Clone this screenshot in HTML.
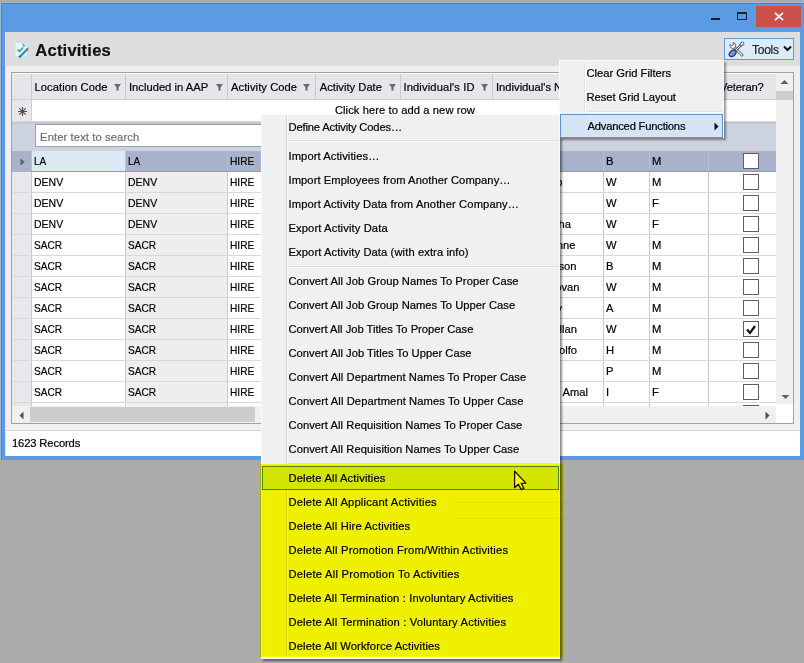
<!DOCTYPE html><html><head><meta charset="utf-8"><style>
*{margin:0;padding:0;box-sizing:border-box}
html,body{width:804px;height:663px;overflow:hidden;background:#ababab;font-family:"Liberation Sans",sans-serif;font-size:11.2px;color:#000}
div,span{position:absolute}
.t{white-space:nowrap;-webkit-text-stroke:0.2px currentColor}
</style></head><body><div style="left:0px;top:0px;width:804px;height:3px;background:#adaaa5;"></div>
<div style="left:0px;top:2px;width:804px;height:458px;background:#5b9be4;"></div>
<div style="left:0px;top:2px;width:804px;height:1px;background:#a2b4cc;"></div>
<div style="left:0px;top:3px;width:804px;height:1px;background:#4f80bd;"></div>
<div style="left:1px;top:3px;width:1px;height:457px;background:#4f80b5;"></div>
<div style="left:0px;top:3px;width:1px;height:457px;background:#9bbcd4;"></div>
<div style="left:5px;top:32px;width:795px;height:424px;background:#f0f0f0;"></div>
<div style="left:5px;top:32px;width:795px;height:34px;background:#dddddd;"></div>
<div style="left:5px;top:32px;width:1px;height:424px;background:#d8ecf8;"></div>
<div style="left:711px;top:18px;width:9px;height:2px;background:#0f1a2a;"></div>
<div style="left:737px;top:12px;width:10px;height:8px;border:1px solid #1b2535;border-top-width:2px"></div>
<div style="left:756px;top:6px;width:45px;height:21px;background:#c9514a;"></div>
<svg style="position:absolute;left:774px;top:12px" width="10" height="9" viewBox="0 0 10 9"><path d="M1 0.8 L9 8.2 M9 0.8 L1 8.2" stroke="#fff" stroke-width="1.7"/></svg>
<svg style="position:absolute;left:13px;top:41px" width="17" height="17" viewBox="0 0 17 17"><path d="M2 1.5 L11 1.5 L14.5 5 L14.5 16 L2 16 Z" fill="#e6f6fc" stroke="#c4e4f2" stroke-width="1"/><path d="M9 1.5 L12.5 5 L10.5 6 Z" fill="#4aa8a8"/><path d="M4.5 8.5 L6.5 10.5 L10 6.5" fill="none" stroke="#3d9a74" stroke-width="1.5"/><path d="M6 15 L13 8 L14.6 9.6 L7.6 16.6 Z" fill="#1d93da"/><path d="M13 8 L14.2 6.6 L15.8 8.2 L14.6 9.6 Z" fill="#b24a3a"/><circle cx="6.5" cy="15.6" r="0.9" fill="#2a3a4a"/></svg>
<span class="t" style="left:35.30px;top:41px;line-height:12px;letter-spacing:0.189px;font-size:16.6px;font-weight:bold;line-height:20px;color:#111">Activities</span>
<div style="left:724px;top:38px;width:70px;height:22px;background:#dcebfa;border:1px solid #5b9bd5"></div>
<svg style="position:absolute;left:728px;top:41px" width="17" height="17" viewBox="0 0 17 17"><path d="M6.5 6.5 L14 14" stroke="#6b6b6b" stroke-width="3" stroke-linecap="round"/><path d="M6.5 6.5 L14 14" stroke="#f2f2f2" stroke-width="1.1" stroke-linecap="round"/><path d="M2.2 3.2 Q1.2 6.8 4.6 7.6 Q7.6 7.8 7.8 4.8 Q7.6 2 5.2 1.4 L5.4 3.8 L3.8 4.6 Z" fill="#f6e4e4" stroke="#6b6b6b" stroke-width="1"/><path d="M7 10 L13.6 3.4" stroke="#6b6b6b" stroke-width="2.8" stroke-linecap="round"/><path d="M7 10 L13.6 3.4" stroke="#f2f2f2" stroke-width="1" stroke-linecap="round"/><ellipse cx="14" cy="3" rx="2.1" ry="1.5" transform="rotate(-45 14 3)" fill="#f8f8f8" stroke="#6b6b6b" stroke-width="1"/><ellipse cx="4.6" cy="12.4" rx="3.9" ry="2.6" transform="rotate(-45 4.6 12.4)" fill="#7b96d2" stroke="#1e3c78" stroke-width="1.3"/></svg>
<span class="t" style="left:752.00px;top:44px;line-height:12px;letter-spacing:-0.250px;font-size:12px;color:#222">Tools</span>
<svg style="position:absolute;left:783px;top:45px" width="9" height="7" viewBox="0 0 9 7"><path d="M1 1.5 L4.5 5 L8 1.5" fill="none" stroke="#111" stroke-width="2"/></svg>
<div style="left:11px;top:72px;width:783px;height:352px;background:#a0a0a5;"></div>
<div style="left:12px;top:73px;width:781px;height:350px;background:#ffffff;"></div>
<div style="left:12px;top:73px;width:764px;height:1px;background:#ffffff;"></div>
<div style="left:12px;top:74px;width:764px;height:25px;background:#e6e6ea;"></div>
<div style="left:12px;top:99px;width:764px;height:1px;background:#cfcfd4;"></div>
<div style="left:776px;top:73px;width:17px;height:350px;background:#f0f0f0;"></div>
<div style="left:776px;top:73px;width:17px;height:18px;background:#f0f0f0;"></div>
<div style="left:776px;top:91px;width:17px;height:9px;background:#cdcdcd;"></div>
<svg style="position:absolute;left:780px;top:79px" width="9" height="6"><path d="M0.5 5 L4.5 1 L8.5 5 Z" fill="#606060"/></svg>
<svg style="position:absolute;left:781px;top:394px" width="9" height="6"><path d="M0.5 1 L4.5 5 L8.5 1 Z" fill="#606060"/></svg>
<div style="left:776px;top:404px;width:17px;height:19px;background:#ffffff;"></div>
<div style="left:12px;top:74px;width:19px;height:25px;background:#e6e6ea;"></div>
<div style="left:31px;top:74px;width:1px;height:25px;background:#c9c9cf;"></div>
<div style="left:125px;top:74px;width:1px;height:25px;background:#c9c9cf;"></div>
<div style="left:227px;top:74px;width:1px;height:25px;background:#c9c9cf;"></div>
<div style="left:315px;top:74px;width:1px;height:25px;background:#c9c9cf;"></div>
<div style="left:400px;top:74px;width:1px;height:25px;background:#c9c9cf;"></div>
<div style="left:492px;top:74px;width:1px;height:25px;background:#c9c9cf;"></div>
<div style="left:603px;top:74px;width:1px;height:25px;background:#c9c9cf;"></div>
<div style="left:649px;top:74px;width:1px;height:25px;background:#c9c9cf;"></div>
<div style="left:708px;top:74px;width:1px;height:25px;background:#c9c9cf;"></div>
<span class="t" style="left:34.50px;top:81px;line-height:12px;letter-spacing:0.067px;color:#000">Location Code</span>
<svg style="position:absolute;left:114px;top:83px" width="8" height="8" viewBox="0 0 8 8"><path d="M0 1 L7 1 L4.6 4.2 L4.6 7.6 L2.4 7.6 L2.4 4.2 Z" fill="#6a6a6a"/></svg>
<span class="t" style="left:129.00px;top:81px;line-height:12px;letter-spacing:0.007px;color:#000">Included in AAP</span>
<svg style="position:absolute;left:216px;top:83px" width="8" height="8" viewBox="0 0 8 8"><path d="M0 1 L7 1 L4.6 4.2 L4.6 7.6 L2.4 7.6 L2.4 4.2 Z" fill="#6a6a6a"/></svg>
<span class="t" style="left:231.00px;top:81px;line-height:12px;letter-spacing:0.067px;color:#000">Activity Code</span>
<svg style="position:absolute;left:303px;top:83px" width="8" height="8" viewBox="0 0 8 8"><path d="M0 1 L7 1 L4.6 4.2 L4.6 7.6 L2.4 7.6 L2.4 4.2 Z" fill="#6a6a6a"/></svg>
<span class="t" style="left:319.70px;top:81px;line-height:12px;letter-spacing:0.008px;color:#000">Activity Date</span>
<svg style="position:absolute;left:389px;top:83px" width="8" height="8" viewBox="0 0 8 8"><path d="M0 1 L7 1 L4.6 4.2 L4.6 7.6 L2.4 7.6 L2.4 4.2 Z" fill="#6a6a6a"/></svg>
<span class="t" style="left:403.40px;top:81px;line-height:12px;letter-spacing:0.136px;color:#000">Individual's ID</span>
<svg style="position:absolute;left:481px;top:83px" width="8" height="8" viewBox="0 0 8 8"><path d="M0 1 L7 1 L4.6 4.2 L4.6 7.6 L2.4 7.6 L2.4 4.2 Z" fill="#6a6a6a"/></svg>
<span class="t" style="left:496px;top:81px;line-height:12px;color:#000">Individual's Name</span>
<span class="t" style="left:720.00px;top:81px;line-height:12px;letter-spacing:-0.143px;color:#000">Veteran?</span>
<div style="left:12px;top:100px;width:764px;height:21px;background:#ffffff;"></div>
<div style="left:12px;top:100px;width:19px;height:21px;background:#e8e8ec;"></div>
<div style="left:31px;top:100px;width:1px;height:21px;background:#d0d0d6;"></div>
<svg style="position:absolute;left:17px;top:106px" width="11" height="11" viewBox="0 0 11 11"><path d="M5.5 1 V10 M1 5.5 H10 M2.3 2.3 L8.7 8.7 M2.3 8.7 L8.7 2.3" stroke="#505050" stroke-width="1.15"/></svg>
<span class="t" style="left:334.90px;top:104px;line-height:12px;letter-spacing:0.077px;color:#000">Click here to add a new row</span>
<div style="left:12px;top:121px;width:764px;height:1px;background:#d8d8dc;"></div>
<div style="left:12px;top:122px;width:764px;height:29px;background:#cdd2e0;"></div>
<div style="left:12px;top:122px;width:764px;height:2px;background:#c4c6d0;"></div>
<div style="left:35px;top:124px;width:480px;height:23px;background:#ffffff;border:1px solid;border-color:#9da1ab #c4c8d0 #9da1ab #9da1ab"></div>
<span class="t" style="left:40.10px;top:131px;line-height:12px;letter-spacing:0.111px;color:#6d6d6d">Enter text to search</span>
<div style="left:12px;top:151px;width:764px;height:21px;background:#a9b1cb;"></div>
<div style="left:31px;top:151px;width:94px;height:21px;background:#dde8f3;"></div>
<svg style="position:absolute;left:20px;top:158px" width="6" height="8"><path d="M0.5 0.5 L5 4 L0.5 7.5 Z" fill="#62656f"/></svg>
<div style="left:31px;top:151px;width:1px;height:21px;background:#b9bfd6;"></div>
<div style="left:125px;top:151px;width:1px;height:21px;background:#b9bfd6;"></div>
<div style="left:227px;top:151px;width:1px;height:21px;background:#b9bfd6;"></div>
<div style="left:315px;top:151px;width:1px;height:21px;background:#b9bfd6;"></div>
<div style="left:400px;top:151px;width:1px;height:21px;background:#b9bfd6;"></div>
<div style="left:492px;top:151px;width:1px;height:21px;background:#b9bfd6;"></div>
<div style="left:603px;top:151px;width:1px;height:21px;background:#b9bfd6;"></div>
<div style="left:649px;top:151px;width:1px;height:21px;background:#b9bfd6;"></div>
<div style="left:708px;top:151px;width:1px;height:21px;background:#b9bfd6;"></div>
<div style="left:31px;top:171px;width:745px;height:1px;background:#6ea2dc;"></div>
<span class="t" style="left:33.71px;top:155px;line-height:12px;transform:scaleX(0.8923);transform-origin:0 0;">LA</span>
<span class="t" style="left:127.61px;top:155px;line-height:12px;transform:scaleX(0.8923);transform-origin:0 0;">LA</span>
<span class="t" style="left:229.69px;top:155px;line-height:12px;transform:scaleX(0.9080);transform-origin:0 0;">HIRE</span>
<span class="t" style="left:606px;top:155px;line-height:12px;">B</span>
<span class="t" style="left:652px;top:155px;line-height:12px;">M</span>
<div style="left:743px;top:153px;width:16px;height:16px;border:1px solid #5e5e5e;background:#fff"></div>
<div style="left:12px;top:172px;width:19px;height:21px;background:#e8e8ec;"></div>
<div style="left:31px;top:172px;width:745px;height:21px;background:#ffffff;"></div>
<div style="left:125px;top:172px;width:102px;height:21px;background:#efeeec;"></div>
<div style="left:31px;top:172px;width:1px;height:21px;background:#c9c9cf;"></div>
<div style="left:125px;top:172px;width:1px;height:21px;background:#c9c9cf;"></div>
<div style="left:227px;top:172px;width:1px;height:21px;background:#c9c9cf;"></div>
<div style="left:315px;top:172px;width:1px;height:21px;background:#c9c9cf;"></div>
<div style="left:400px;top:172px;width:1px;height:21px;background:#c9c9cf;"></div>
<div style="left:492px;top:172px;width:1px;height:21px;background:#c9c9cf;"></div>
<div style="left:603px;top:172px;width:1px;height:21px;background:#c9c9cf;"></div>
<div style="left:649px;top:172px;width:1px;height:21px;background:#c9c9cf;"></div>
<div style="left:708px;top:172px;width:1px;height:21px;background:#c9c9cf;"></div>
<div style="left:12px;top:192px;width:764px;height:1px;background:#d8d8dc;"></div>
<span class="t" style="left:33.66px;top:176px;line-height:12px;transform:scaleX(0.9367);transform-origin:0 0;">DENV</span>
<span class="t" style="left:127.56px;top:176px;line-height:12px;transform:scaleX(0.9367);transform-origin:0 0;">DENV</span>
<span class="t" style="left:229.69px;top:176px;line-height:12px;transform:scaleX(0.9080);transform-origin:0 0;">HIRE</span>
<span class="t" style="left:606px;top:176px;line-height:12px;">W</span>
<span class="t" style="left:652px;top:176px;line-height:12px;">M</span>
<div style="left:743px;top:174px;width:16px;height:16px;border:1px solid #5e5e5e;background:#fff"></div>
<div style="left:12px;top:193px;width:19px;height:21px;background:#e8e8ec;"></div>
<div style="left:31px;top:193px;width:745px;height:21px;background:#ffffff;"></div>
<div style="left:125px;top:193px;width:102px;height:21px;background:#efeeec;"></div>
<div style="left:31px;top:193px;width:1px;height:21px;background:#c9c9cf;"></div>
<div style="left:125px;top:193px;width:1px;height:21px;background:#c9c9cf;"></div>
<div style="left:227px;top:193px;width:1px;height:21px;background:#c9c9cf;"></div>
<div style="left:315px;top:193px;width:1px;height:21px;background:#c9c9cf;"></div>
<div style="left:400px;top:193px;width:1px;height:21px;background:#c9c9cf;"></div>
<div style="left:492px;top:193px;width:1px;height:21px;background:#c9c9cf;"></div>
<div style="left:603px;top:193px;width:1px;height:21px;background:#c9c9cf;"></div>
<div style="left:649px;top:193px;width:1px;height:21px;background:#c9c9cf;"></div>
<div style="left:708px;top:193px;width:1px;height:21px;background:#c9c9cf;"></div>
<div style="left:12px;top:213px;width:764px;height:1px;background:#d8d8dc;"></div>
<span class="t" style="left:33.66px;top:197px;line-height:12px;transform:scaleX(0.9367);transform-origin:0 0;">DENV</span>
<span class="t" style="left:127.56px;top:197px;line-height:12px;transform:scaleX(0.9367);transform-origin:0 0;">DENV</span>
<span class="t" style="left:229.69px;top:197px;line-height:12px;transform:scaleX(0.9080);transform-origin:0 0;">HIRE</span>
<span class="t" style="left:606px;top:197px;line-height:12px;">W</span>
<span class="t" style="left:652px;top:197px;line-height:12px;">F</span>
<div style="left:743px;top:195px;width:16px;height:16px;border:1px solid #5e5e5e;background:#fff"></div>
<div style="left:12px;top:214px;width:19px;height:21px;background:#e8e8ec;"></div>
<div style="left:31px;top:214px;width:745px;height:21px;background:#ffffff;"></div>
<div style="left:125px;top:214px;width:102px;height:21px;background:#efeeec;"></div>
<div style="left:31px;top:214px;width:1px;height:21px;background:#c9c9cf;"></div>
<div style="left:125px;top:214px;width:1px;height:21px;background:#c9c9cf;"></div>
<div style="left:227px;top:214px;width:1px;height:21px;background:#c9c9cf;"></div>
<div style="left:315px;top:214px;width:1px;height:21px;background:#c9c9cf;"></div>
<div style="left:400px;top:214px;width:1px;height:21px;background:#c9c9cf;"></div>
<div style="left:492px;top:214px;width:1px;height:21px;background:#c9c9cf;"></div>
<div style="left:603px;top:214px;width:1px;height:21px;background:#c9c9cf;"></div>
<div style="left:649px;top:214px;width:1px;height:21px;background:#c9c9cf;"></div>
<div style="left:708px;top:214px;width:1px;height:21px;background:#c9c9cf;"></div>
<div style="left:12px;top:234px;width:764px;height:1px;background:#d8d8dc;"></div>
<span class="t" style="left:33.66px;top:218px;line-height:12px;transform:scaleX(0.9367);transform-origin:0 0;">DENV</span>
<span class="t" style="left:127.56px;top:218px;line-height:12px;transform:scaleX(0.9367);transform-origin:0 0;">DENV</span>
<span class="t" style="left:229.69px;top:218px;line-height:12px;transform:scaleX(0.9080);transform-origin:0 0;">HIRE</span>
<span class="t" style="left:606px;top:218px;line-height:12px;">W</span>
<span class="t" style="left:652px;top:218px;line-height:12px;">F</span>
<div style="left:743px;top:216px;width:16px;height:16px;border:1px solid #5e5e5e;background:#fff"></div>
<div style="left:12px;top:235px;width:19px;height:21px;background:#e8e8ec;"></div>
<div style="left:31px;top:235px;width:745px;height:21px;background:#ffffff;"></div>
<div style="left:125px;top:235px;width:102px;height:21px;background:#efeeec;"></div>
<div style="left:31px;top:235px;width:1px;height:21px;background:#c9c9cf;"></div>
<div style="left:125px;top:235px;width:1px;height:21px;background:#c9c9cf;"></div>
<div style="left:227px;top:235px;width:1px;height:21px;background:#c9c9cf;"></div>
<div style="left:315px;top:235px;width:1px;height:21px;background:#c9c9cf;"></div>
<div style="left:400px;top:235px;width:1px;height:21px;background:#c9c9cf;"></div>
<div style="left:492px;top:235px;width:1px;height:21px;background:#c9c9cf;"></div>
<div style="left:603px;top:235px;width:1px;height:21px;background:#c9c9cf;"></div>
<div style="left:649px;top:235px;width:1px;height:21px;background:#c9c9cf;"></div>
<div style="left:708px;top:235px;width:1px;height:21px;background:#c9c9cf;"></div>
<div style="left:12px;top:255px;width:764px;height:1px;background:#d8d8dc;"></div>
<span class="t" style="left:33.70px;top:239px;line-height:12px;transform:scaleX(0.9034);transform-origin:0 0;">SACR</span>
<span class="t" style="left:127.60px;top:239px;line-height:12px;transform:scaleX(0.9034);transform-origin:0 0;">SACR</span>
<span class="t" style="left:229.69px;top:239px;line-height:12px;transform:scaleX(0.9080);transform-origin:0 0;">HIRE</span>
<span class="t" style="left:606px;top:239px;line-height:12px;">W</span>
<span class="t" style="left:652px;top:239px;line-height:12px;">M</span>
<div style="left:743px;top:237px;width:16px;height:16px;border:1px solid #5e5e5e;background:#fff"></div>
<div style="left:12px;top:256px;width:19px;height:21px;background:#e8e8ec;"></div>
<div style="left:31px;top:256px;width:745px;height:21px;background:#ffffff;"></div>
<div style="left:125px;top:256px;width:102px;height:21px;background:#efeeec;"></div>
<div style="left:31px;top:256px;width:1px;height:21px;background:#c9c9cf;"></div>
<div style="left:125px;top:256px;width:1px;height:21px;background:#c9c9cf;"></div>
<div style="left:227px;top:256px;width:1px;height:21px;background:#c9c9cf;"></div>
<div style="left:315px;top:256px;width:1px;height:21px;background:#c9c9cf;"></div>
<div style="left:400px;top:256px;width:1px;height:21px;background:#c9c9cf;"></div>
<div style="left:492px;top:256px;width:1px;height:21px;background:#c9c9cf;"></div>
<div style="left:603px;top:256px;width:1px;height:21px;background:#c9c9cf;"></div>
<div style="left:649px;top:256px;width:1px;height:21px;background:#c9c9cf;"></div>
<div style="left:708px;top:256px;width:1px;height:21px;background:#c9c9cf;"></div>
<div style="left:12px;top:276px;width:764px;height:1px;background:#d8d8dc;"></div>
<span class="t" style="left:33.70px;top:260px;line-height:12px;transform:scaleX(0.9034);transform-origin:0 0;">SACR</span>
<span class="t" style="left:127.60px;top:260px;line-height:12px;transform:scaleX(0.9034);transform-origin:0 0;">SACR</span>
<span class="t" style="left:229.69px;top:260px;line-height:12px;transform:scaleX(0.9080);transform-origin:0 0;">HIRE</span>
<span class="t" style="left:606px;top:260px;line-height:12px;">B</span>
<span class="t" style="left:652px;top:260px;line-height:12px;">M</span>
<div style="left:743px;top:258px;width:16px;height:16px;border:1px solid #5e5e5e;background:#fff"></div>
<div style="left:12px;top:277px;width:19px;height:21px;background:#e8e8ec;"></div>
<div style="left:31px;top:277px;width:745px;height:21px;background:#ffffff;"></div>
<div style="left:125px;top:277px;width:102px;height:21px;background:#efeeec;"></div>
<div style="left:31px;top:277px;width:1px;height:21px;background:#c9c9cf;"></div>
<div style="left:125px;top:277px;width:1px;height:21px;background:#c9c9cf;"></div>
<div style="left:227px;top:277px;width:1px;height:21px;background:#c9c9cf;"></div>
<div style="left:315px;top:277px;width:1px;height:21px;background:#c9c9cf;"></div>
<div style="left:400px;top:277px;width:1px;height:21px;background:#c9c9cf;"></div>
<div style="left:492px;top:277px;width:1px;height:21px;background:#c9c9cf;"></div>
<div style="left:603px;top:277px;width:1px;height:21px;background:#c9c9cf;"></div>
<div style="left:649px;top:277px;width:1px;height:21px;background:#c9c9cf;"></div>
<div style="left:708px;top:277px;width:1px;height:21px;background:#c9c9cf;"></div>
<div style="left:12px;top:297px;width:764px;height:1px;background:#d8d8dc;"></div>
<span class="t" style="left:33.70px;top:281px;line-height:12px;transform:scaleX(0.9034);transform-origin:0 0;">SACR</span>
<span class="t" style="left:127.60px;top:281px;line-height:12px;transform:scaleX(0.9034);transform-origin:0 0;">SACR</span>
<span class="t" style="left:229.69px;top:281px;line-height:12px;transform:scaleX(0.9080);transform-origin:0 0;">HIRE</span>
<span class="t" style="left:606px;top:281px;line-height:12px;">W</span>
<span class="t" style="left:652px;top:281px;line-height:12px;">M</span>
<div style="left:743px;top:279px;width:16px;height:16px;border:1px solid #5e5e5e;background:#fff"></div>
<div style="left:12px;top:298px;width:19px;height:21px;background:#e8e8ec;"></div>
<div style="left:31px;top:298px;width:745px;height:21px;background:#ffffff;"></div>
<div style="left:125px;top:298px;width:102px;height:21px;background:#efeeec;"></div>
<div style="left:31px;top:298px;width:1px;height:21px;background:#c9c9cf;"></div>
<div style="left:125px;top:298px;width:1px;height:21px;background:#c9c9cf;"></div>
<div style="left:227px;top:298px;width:1px;height:21px;background:#c9c9cf;"></div>
<div style="left:315px;top:298px;width:1px;height:21px;background:#c9c9cf;"></div>
<div style="left:400px;top:298px;width:1px;height:21px;background:#c9c9cf;"></div>
<div style="left:492px;top:298px;width:1px;height:21px;background:#c9c9cf;"></div>
<div style="left:603px;top:298px;width:1px;height:21px;background:#c9c9cf;"></div>
<div style="left:649px;top:298px;width:1px;height:21px;background:#c9c9cf;"></div>
<div style="left:708px;top:298px;width:1px;height:21px;background:#c9c9cf;"></div>
<div style="left:12px;top:318px;width:764px;height:1px;background:#d8d8dc;"></div>
<span class="t" style="left:33.70px;top:302px;line-height:12px;transform:scaleX(0.9034);transform-origin:0 0;">SACR</span>
<span class="t" style="left:127.60px;top:302px;line-height:12px;transform:scaleX(0.9034);transform-origin:0 0;">SACR</span>
<span class="t" style="left:229.69px;top:302px;line-height:12px;transform:scaleX(0.9080);transform-origin:0 0;">HIRE</span>
<span class="t" style="left:606px;top:302px;line-height:12px;">A</span>
<span class="t" style="left:652px;top:302px;line-height:12px;">M</span>
<div style="left:743px;top:300px;width:16px;height:16px;border:1px solid #5e5e5e;background:#fff"></div>
<div style="left:12px;top:319px;width:19px;height:21px;background:#e8e8ec;"></div>
<div style="left:31px;top:319px;width:745px;height:21px;background:#ffffff;"></div>
<div style="left:125px;top:319px;width:102px;height:21px;background:#efeeec;"></div>
<div style="left:31px;top:319px;width:1px;height:21px;background:#c9c9cf;"></div>
<div style="left:125px;top:319px;width:1px;height:21px;background:#c9c9cf;"></div>
<div style="left:227px;top:319px;width:1px;height:21px;background:#c9c9cf;"></div>
<div style="left:315px;top:319px;width:1px;height:21px;background:#c9c9cf;"></div>
<div style="left:400px;top:319px;width:1px;height:21px;background:#c9c9cf;"></div>
<div style="left:492px;top:319px;width:1px;height:21px;background:#c9c9cf;"></div>
<div style="left:603px;top:319px;width:1px;height:21px;background:#c9c9cf;"></div>
<div style="left:649px;top:319px;width:1px;height:21px;background:#c9c9cf;"></div>
<div style="left:708px;top:319px;width:1px;height:21px;background:#c9c9cf;"></div>
<div style="left:12px;top:339px;width:764px;height:1px;background:#d8d8dc;"></div>
<span class="t" style="left:33.70px;top:323px;line-height:12px;transform:scaleX(0.9034);transform-origin:0 0;">SACR</span>
<span class="t" style="left:127.60px;top:323px;line-height:12px;transform:scaleX(0.9034);transform-origin:0 0;">SACR</span>
<span class="t" style="left:229.69px;top:323px;line-height:12px;transform:scaleX(0.9080);transform-origin:0 0;">HIRE</span>
<span class="t" style="left:606px;top:323px;line-height:12px;">W</span>
<span class="t" style="left:652px;top:323px;line-height:12px;">M</span>
<div style="left:743px;top:321px;width:16px;height:16px;border:1px solid #5e5e5e;background:#fff"></div>
<svg style="position:absolute;left:743px;top:321px" width="16" height="16"><path d="M4 8.5 L7 12 L12 5" fill="none" stroke="#111" stroke-width="2.2"/></svg>
<div style="left:12px;top:340px;width:19px;height:21px;background:#e8e8ec;"></div>
<div style="left:31px;top:340px;width:745px;height:21px;background:#ffffff;"></div>
<div style="left:125px;top:340px;width:102px;height:21px;background:#efeeec;"></div>
<div style="left:31px;top:340px;width:1px;height:21px;background:#c9c9cf;"></div>
<div style="left:125px;top:340px;width:1px;height:21px;background:#c9c9cf;"></div>
<div style="left:227px;top:340px;width:1px;height:21px;background:#c9c9cf;"></div>
<div style="left:315px;top:340px;width:1px;height:21px;background:#c9c9cf;"></div>
<div style="left:400px;top:340px;width:1px;height:21px;background:#c9c9cf;"></div>
<div style="left:492px;top:340px;width:1px;height:21px;background:#c9c9cf;"></div>
<div style="left:603px;top:340px;width:1px;height:21px;background:#c9c9cf;"></div>
<div style="left:649px;top:340px;width:1px;height:21px;background:#c9c9cf;"></div>
<div style="left:708px;top:340px;width:1px;height:21px;background:#c9c9cf;"></div>
<div style="left:12px;top:360px;width:764px;height:1px;background:#d8d8dc;"></div>
<span class="t" style="left:33.70px;top:344px;line-height:12px;transform:scaleX(0.9034);transform-origin:0 0;">SACR</span>
<span class="t" style="left:127.60px;top:344px;line-height:12px;transform:scaleX(0.9034);transform-origin:0 0;">SACR</span>
<span class="t" style="left:229.69px;top:344px;line-height:12px;transform:scaleX(0.9080);transform-origin:0 0;">HIRE</span>
<span class="t" style="left:606px;top:344px;line-height:12px;">H</span>
<span class="t" style="left:652px;top:344px;line-height:12px;">M</span>
<div style="left:743px;top:342px;width:16px;height:16px;border:1px solid #5e5e5e;background:#fff"></div>
<div style="left:12px;top:361px;width:19px;height:21px;background:#e8e8ec;"></div>
<div style="left:31px;top:361px;width:745px;height:21px;background:#ffffff;"></div>
<div style="left:125px;top:361px;width:102px;height:21px;background:#efeeec;"></div>
<div style="left:31px;top:361px;width:1px;height:21px;background:#c9c9cf;"></div>
<div style="left:125px;top:361px;width:1px;height:21px;background:#c9c9cf;"></div>
<div style="left:227px;top:361px;width:1px;height:21px;background:#c9c9cf;"></div>
<div style="left:315px;top:361px;width:1px;height:21px;background:#c9c9cf;"></div>
<div style="left:400px;top:361px;width:1px;height:21px;background:#c9c9cf;"></div>
<div style="left:492px;top:361px;width:1px;height:21px;background:#c9c9cf;"></div>
<div style="left:603px;top:361px;width:1px;height:21px;background:#c9c9cf;"></div>
<div style="left:649px;top:361px;width:1px;height:21px;background:#c9c9cf;"></div>
<div style="left:708px;top:361px;width:1px;height:21px;background:#c9c9cf;"></div>
<div style="left:12px;top:381px;width:764px;height:1px;background:#d8d8dc;"></div>
<span class="t" style="left:33.70px;top:365px;line-height:12px;transform:scaleX(0.9034);transform-origin:0 0;">SACR</span>
<span class="t" style="left:127.60px;top:365px;line-height:12px;transform:scaleX(0.9034);transform-origin:0 0;">SACR</span>
<span class="t" style="left:229.69px;top:365px;line-height:12px;transform:scaleX(0.9080);transform-origin:0 0;">HIRE</span>
<span class="t" style="left:606px;top:365px;line-height:12px;">P</span>
<span class="t" style="left:652px;top:365px;line-height:12px;">M</span>
<div style="left:743px;top:363px;width:16px;height:16px;border:1px solid #5e5e5e;background:#fff"></div>
<div style="left:12px;top:382px;width:19px;height:21px;background:#e8e8ec;"></div>
<div style="left:31px;top:382px;width:745px;height:21px;background:#ffffff;"></div>
<div style="left:125px;top:382px;width:102px;height:21px;background:#efeeec;"></div>
<div style="left:31px;top:382px;width:1px;height:21px;background:#c9c9cf;"></div>
<div style="left:125px;top:382px;width:1px;height:21px;background:#c9c9cf;"></div>
<div style="left:227px;top:382px;width:1px;height:21px;background:#c9c9cf;"></div>
<div style="left:315px;top:382px;width:1px;height:21px;background:#c9c9cf;"></div>
<div style="left:400px;top:382px;width:1px;height:21px;background:#c9c9cf;"></div>
<div style="left:492px;top:382px;width:1px;height:21px;background:#c9c9cf;"></div>
<div style="left:603px;top:382px;width:1px;height:21px;background:#c9c9cf;"></div>
<div style="left:649px;top:382px;width:1px;height:21px;background:#c9c9cf;"></div>
<div style="left:708px;top:382px;width:1px;height:21px;background:#c9c9cf;"></div>
<div style="left:12px;top:402px;width:764px;height:1px;background:#d8d8dc;"></div>
<span class="t" style="left:33.70px;top:386px;line-height:12px;transform:scaleX(0.9034);transform-origin:0 0;">SACR</span>
<span class="t" style="left:127.60px;top:386px;line-height:12px;transform:scaleX(0.9034);transform-origin:0 0;">SACR</span>
<span class="t" style="left:229.69px;top:386px;line-height:12px;transform:scaleX(0.9080);transform-origin:0 0;">HIRE</span>
<span class="t" style="left:606px;top:386px;line-height:12px;">I</span>
<span class="t" style="left:652px;top:386px;line-height:12px;">F</span>
<div style="left:743px;top:384px;width:16px;height:16px;border:1px solid #5e5e5e;background:#fff"></div>
<div style="left:12px;top:403px;width:19px;height:21px;background:#e8e8ec;"></div>
<div style="left:31px;top:403px;width:745px;height:21px;background:#ffffff;"></div>
<div style="left:125px;top:403px;width:102px;height:21px;background:#efeeec;"></div>
<div style="left:31px;top:403px;width:1px;height:21px;background:#c9c9cf;"></div>
<div style="left:125px;top:403px;width:1px;height:21px;background:#c9c9cf;"></div>
<div style="left:227px;top:403px;width:1px;height:21px;background:#c9c9cf;"></div>
<div style="left:315px;top:403px;width:1px;height:21px;background:#c9c9cf;"></div>
<div style="left:400px;top:403px;width:1px;height:21px;background:#c9c9cf;"></div>
<div style="left:492px;top:403px;width:1px;height:21px;background:#c9c9cf;"></div>
<div style="left:603px;top:403px;width:1px;height:21px;background:#c9c9cf;"></div>
<div style="left:649px;top:403px;width:1px;height:21px;background:#c9c9cf;"></div>
<div style="left:708px;top:403px;width:1px;height:21px;background:#c9c9cf;"></div>
<div style="left:12px;top:423px;width:764px;height:1px;background:#d8d8dc;"></div>
<div style="left:743px;top:405px;width:16px;height:16px;border:1px solid #5e5e5e;background:#fff"></div>
<span class="t" style="right:241.5px;top:176px;line-height:12px">Bob</span>
<span class="t" style="right:233px;top:218px;line-height:12px">Tabitha</span>
<span class="t" style="right:228.5px;top:239px;line-height:12px">Joanne</span>
<span class="t" style="right:227.5px;top:260px;line-height:12px">Carson</span>
<span class="t" style="right:224.5px;top:281px;line-height:12px">Donovan</span>
<span class="t" style="right:242px;top:302px;line-height:12px">Kelly</span>
<span class="t" style="right:227px;top:323px;line-height:12px">Allan</span>
<span class="t" style="right:227px;top:344px;line-height:12px">Rodolfo</span>
<span class="t" style="right:216px;top:386px;line-height:12px">Amal</span>
<div style="left:12px;top:406px;width:764px;height:17px;background:#f0f0f0;"></div>
<div style="left:30px;top:407px;width:225px;height:15px;background:#cdcdcd;"></div>
<svg style="position:absolute;left:19px;top:411px" width="5" height="9"><path d="M4.5 0.5 L0.5 4.5 L4.5 8.5 Z" fill="#505050"/></svg>
<svg style="position:absolute;left:765px;top:411px" width="5" height="9"><path d="M0.5 0.5 L4.5 4.5 L0.5 8.5 Z" fill="#505050"/></svg>
<div style="left:11px;top:423px;width:783px;height:1px;background:#a0a0a5;"></div>
<div style="left:6px;top:430px;width:794px;height:1px;background:#d4d4d4;"></div>
<div style="left:6px;top:431px;width:794px;height:25px;background:#ffffff;"></div>
<span class="t" style="left:12.00px;top:437px;line-height:12px;letter-spacing:-0.127px;">1623 Records</span>
<div style="left:261px;top:114px;width:299px;height:545px;background:#f0f0f0;border:1px solid #f9f9f9;box-shadow:1.5px 1.5px 2px rgba(0,0,0,0.45)"></div>
<div style="left:286px;top:115px;width:1px;height:543px;background:#d6d6d6;"></div>
<div style="left:287px;top:115px;width:1px;height:543px;background:#f8f8f8;"></div>
<div style="left:262px;top:466px;width:297px;height:24px;background:#d5e4f5;border:1px solid #4a88cc"></div>
<div style="left:262px;top:656px;width:297px;height:2px;background:#fafafa;"></div>
<div style="left:288px;top:140px;width:271px;height:1px;background:#dedede;"></div>
<div style="left:288px;top:141px;width:271px;height:1px;background:#fafafa;"></div>
<div style="left:288px;top:266px;width:271px;height:1px;background:#dedede;"></div>
<div style="left:288px;top:267px;width:271px;height:1px;background:#fafafa;"></div>
<div style="left:288px;top:463px;width:271px;height:1px;background:#dedede;"></div>
<div style="left:288px;top:464px;width:271px;height:1px;background:#fafafa;"></div>
<span class="t" style="left:288.50px;top:121px;line-height:12px;letter-spacing:-0.157px;color:#000">Define Activity Codes…</span>
<span class="t" style="left:288.50px;top:150px;line-height:12px;letter-spacing:0.076px;color:#000">Import Activities…</span>
<span class="t" style="left:288.50px;top:174px;line-height:12px;letter-spacing:0.068px;color:#000">Import Employees from Another Company…</span>
<span class="t" style="left:288.50px;top:198px;line-height:12px;letter-spacing:0.117px;color:#000">Import Activity Data from Another Company…</span>
<span class="t" style="left:288.50px;top:222px;line-height:12px;letter-spacing:0.111px;color:#000">Export Activity Data</span>
<span class="t" style="left:288.50px;top:246px;line-height:12px;letter-spacing:0.095px;color:#000">Export Activity Data (with extra info)</span>
<span class="t" style="left:288.50px;top:275px;line-height:12px;letter-spacing:0.034px;color:#000">Convert All Job Group Names To Proper Case</span>
<span class="t" style="left:288.50px;top:299px;line-height:12px;letter-spacing:0.028px;color:#000">Convert All Job Group Names To Upper Case</span>
<span class="t" style="left:288.50px;top:323px;line-height:12px;letter-spacing:-0.006px;color:#000">Convert All Job Titles To Proper Case</span>
<span class="t" style="left:288.50px;top:347px;line-height:12px;letter-spacing:0.029px;color:#000">Convert All Job Titles To Upper Case</span>
<span class="t" style="left:288.50px;top:371px;line-height:12px;letter-spacing:0.069px;color:#000">Convert All Department Names To Proper Case</span>
<span class="t" style="left:288.50px;top:395px;line-height:12px;letter-spacing:0.080px;color:#000">Convert All Department Names To Upper Case</span>
<span class="t" style="left:288.50px;top:419px;line-height:12px;letter-spacing:0.047px;color:#000">Convert All Requisition Names To Proper Case</span>
<span class="t" style="left:288.50px;top:443px;line-height:12px;letter-spacing:0.048px;color:#000">Convert All Requisition Names To Upper Case</span>
<span class="t" style="left:288.50px;top:472px;line-height:12px;letter-spacing:0.150px;color:#000">Delete All Activities</span>
<span class="t" style="left:288.50px;top:496px;line-height:12px;letter-spacing:0.193px;color:#000">Delete All Applicant Activities</span>
<span class="t" style="left:288.50px;top:520px;line-height:12px;letter-spacing:0.164px;color:#000">Delete All Hire Activities</span>
<span class="t" style="left:288.50px;top:544px;line-height:12px;letter-spacing:0.193px;color:#000">Delete All Promotion From/Within Activities</span>
<span class="t" style="left:288.50px;top:568px;line-height:12px;letter-spacing:0.245px;color:#000">Delete All Promotion To Activities</span>
<span class="t" style="left:288.50px;top:592px;line-height:12px;letter-spacing:0.135px;color:#000">Delete All Termination : Involuntary Activities</span>
<span class="t" style="left:288.50px;top:616px;line-height:12px;letter-spacing:0.159px;color:#000">Delete All Termination : Voluntary Activities</span>
<span class="t" style="left:288.50px;top:640px;line-height:12px;letter-spacing:0.123px;color:#000">Delete All Workforce Activities</span>
<svg style="position:absolute;left:513px;top:470px" width="15" height="22" viewBox="0 0 15 22"><path d="M1.6 1.2 L1.6 17.6 L5.4 14.2 L8.2 19.6 L10.8 18.4 L8.1 13.3 L12.9 13.1 Z" fill="#ffffff" stroke="#111" stroke-width="1.3" stroke-linejoin="round"/></svg>
<div style="left:452px;top:502px;width:352px;height:1px;background:rgba(0,0,0,0.045);"></div>
<div style="left:452px;top:518px;width:352px;height:1px;background:rgba(0,0,0,0.045);"></div>
<div style="left:260px;top:464px;width:303px;height:193px;background:#fdff00;mix-blend-mode:multiply"></div>
<div style="left:559px;top:60px;width:165px;height:78px;background:#f0f0f0;border:1px solid #f9f9f9;box-shadow:1.5px 1.5px 2px rgba(0,0,0,0.4)"></div>
<div style="left:584px;top:61px;width:1px;height:76px;background:#e2e3e3;"></div>
<div style="left:585px;top:61px;width:1px;height:76px;background:#ffffff;"></div>
<span class="t" style="left:586.50px;top:67px;line-height:12px;letter-spacing:0.000px;">Clear Grid Filters</span>
<span class="t" style="left:586.50px;top:91px;line-height:12px;letter-spacing:-0.044px;">Reset Grid Layout</span>
<div style="left:587px;top:111px;width:136px;height:1px;background:#e2e2e2;"></div>
<div style="left:587px;top:112px;width:136px;height:1px;background:#ffffff;"></div>
<div style="left:560px;top:114px;width:163px;height:24px;background:#d5e4f5;border:1px solid #5d93d3"></div>
<span class="t" style="left:587.50px;top:120px;line-height:12px;letter-spacing:-0.200px;">Advanced Functions</span>
<svg style="position:absolute;left:714px;top:122px" width="5" height="9"><path d="M0.5 0.5 L4.5 4.5 L0.5 8.5 Z" fill="#111"/></svg></body></html>
